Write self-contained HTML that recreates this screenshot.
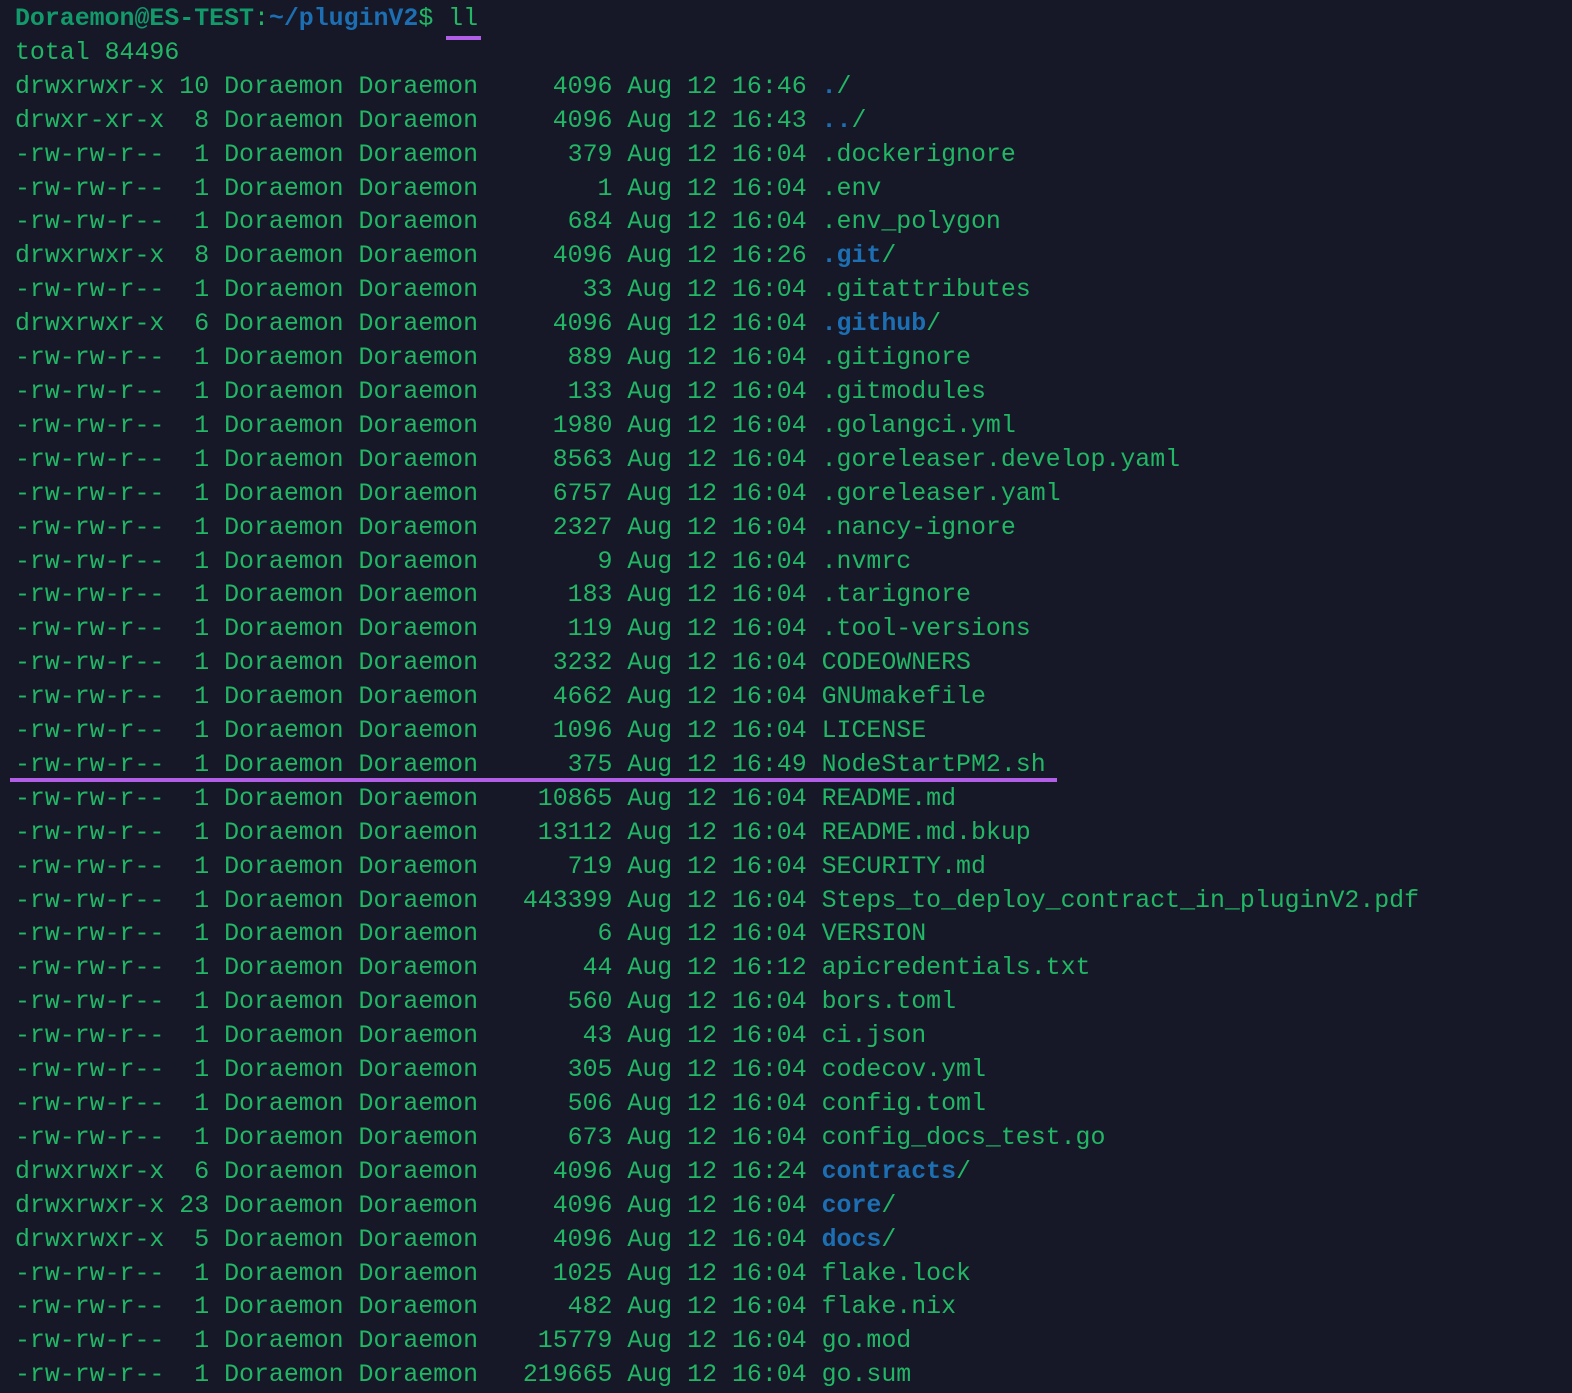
<!DOCTYPE html>
<html><head><meta charset="utf-8"><style>
html,body{margin:0;padding:0;background:#161828;width:1572px;height:1393px;overflow:hidden}
pre{margin:0;position:absolute;left:15px;top:3px;font-family:"Liberation Mono",monospace;font-size:24.9px;line-height:33.9px;color:#22b765;white-space:pre}
b.p{color:#129a6a}
b.d{color:#1d6fb3}
.bl{color:#1d6fb3;font-weight:bold}
.u1{position:absolute;left:446px;top:36px;width:35px;height:4px;background:#b25ee6}
.u2{position:absolute;left:10px;top:778px;width:1047px;height:4px;background:#b25ee6}
</style></head><body>
<pre><b class="p">Doraemon@ES-TEST</b>:<b class="d">~/pluginV2</b>$ ll
total 84496
drwxrwxr-x 10 Doraemon Doraemon     4096 Aug 12 16:46 <span class="bl">.</span>/
drwxr-xr-x  8 Doraemon Doraemon     4096 Aug 12 16:43 <span class="bl">..</span>/
-rw-rw-r--  1 Doraemon Doraemon      379 Aug 12 16:04 .dockerignore
-rw-rw-r--  1 Doraemon Doraemon        1 Aug 12 16:04 .env
-rw-rw-r--  1 Doraemon Doraemon      684 Aug 12 16:04 .env_polygon
drwxrwxr-x  8 Doraemon Doraemon     4096 Aug 12 16:26 <span class="bl">.git</span>/
-rw-rw-r--  1 Doraemon Doraemon       33 Aug 12 16:04 .gitattributes
drwxrwxr-x  6 Doraemon Doraemon     4096 Aug 12 16:04 <span class="bl">.github</span>/
-rw-rw-r--  1 Doraemon Doraemon      889 Aug 12 16:04 .gitignore
-rw-rw-r--  1 Doraemon Doraemon      133 Aug 12 16:04 .gitmodules
-rw-rw-r--  1 Doraemon Doraemon     1980 Aug 12 16:04 .golangci.yml
-rw-rw-r--  1 Doraemon Doraemon     8563 Aug 12 16:04 .goreleaser.develop.yaml
-rw-rw-r--  1 Doraemon Doraemon     6757 Aug 12 16:04 .goreleaser.yaml
-rw-rw-r--  1 Doraemon Doraemon     2327 Aug 12 16:04 .nancy-ignore
-rw-rw-r--  1 Doraemon Doraemon        9 Aug 12 16:04 .nvmrc
-rw-rw-r--  1 Doraemon Doraemon      183 Aug 12 16:04 .tarignore
-rw-rw-r--  1 Doraemon Doraemon      119 Aug 12 16:04 .tool-versions
-rw-rw-r--  1 Doraemon Doraemon     3232 Aug 12 16:04 CODEOWNERS
-rw-rw-r--  1 Doraemon Doraemon     4662 Aug 12 16:04 GNUmakefile
-rw-rw-r--  1 Doraemon Doraemon     1096 Aug 12 16:04 LICENSE
-rw-rw-r--  1 Doraemon Doraemon      375 Aug 12 16:49 NodeStartPM2.sh
-rw-rw-r--  1 Doraemon Doraemon    10865 Aug 12 16:04 README.md
-rw-rw-r--  1 Doraemon Doraemon    13112 Aug 12 16:04 README.md.bkup
-rw-rw-r--  1 Doraemon Doraemon      719 Aug 12 16:04 SECURITY.md
-rw-rw-r--  1 Doraemon Doraemon   443399 Aug 12 16:04 Steps_to_deploy_contract_in_pluginV2.pdf
-rw-rw-r--  1 Doraemon Doraemon        6 Aug 12 16:04 VERSION
-rw-rw-r--  1 Doraemon Doraemon       44 Aug 12 16:12 apicredentials.txt
-rw-rw-r--  1 Doraemon Doraemon      560 Aug 12 16:04 bors.toml
-rw-rw-r--  1 Doraemon Doraemon       43 Aug 12 16:04 ci.json
-rw-rw-r--  1 Doraemon Doraemon      305 Aug 12 16:04 codecov.yml
-rw-rw-r--  1 Doraemon Doraemon      506 Aug 12 16:04 config.toml
-rw-rw-r--  1 Doraemon Doraemon      673 Aug 12 16:04 config_docs_test.go
drwxrwxr-x  6 Doraemon Doraemon     4096 Aug 12 16:24 <span class="bl">contracts</span>/
drwxrwxr-x 23 Doraemon Doraemon     4096 Aug 12 16:04 <span class="bl">core</span>/
drwxrwxr-x  5 Doraemon Doraemon     4096 Aug 12 16:04 <span class="bl">docs</span>/
-rw-rw-r--  1 Doraemon Doraemon     1025 Aug 12 16:04 flake.lock
-rw-rw-r--  1 Doraemon Doraemon      482 Aug 12 16:04 flake.nix
-rw-rw-r--  1 Doraemon Doraemon    15779 Aug 12 16:04 go.mod
-rw-rw-r--  1 Doraemon Doraemon   219665 Aug 12 16:04 go.sum</pre>
<div class="u1"></div>
<div class="u2"></div>
</body></html>
